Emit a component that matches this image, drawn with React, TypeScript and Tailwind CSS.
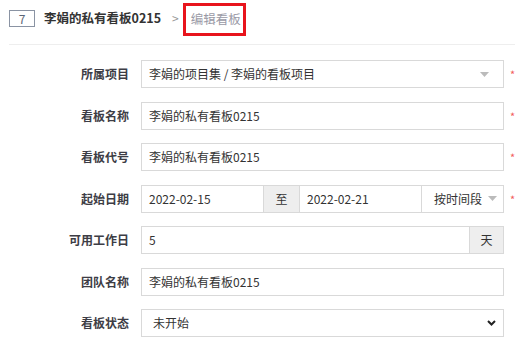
import React from "react";

const font = { fontFamily: '"Noto Sans CJK SC", "Noto Sans", sans-serif' };

function Caret() {
  return (
    <svg width="9" height="5" viewBox="0 0 9 5" className="shrink-0">
      <path d="M0 0 L9 0 L4.5 5 Z" fill="#bbb" />
    </svg>
  );
}

function Star({ show = true }: { show?: boolean }) {
  return (
    <div className="w-[11px] shrink-0 self-start pt-[9px] pl-[6px] text-[11px] leading-none text-[#f25c5c]">
      {show ? "*" : ""}
    </div>
  );
}

function Row({ label, children, star = true }: { label: string; children: React.ReactNode; star?: boolean }) {
  return (
    <div className="flex h-[28px] items-stretch">
      <div className="w-[141px] shrink-0 pr-[12px] text-right text-[12px] font-bold leading-[28px] text-[#3d3d45]">
        {label}
      </div>
      <div className="flex w-[363px] shrink-0">{children}</div>
      <Star show={star} />
    </div>
  );
}

function Box({ children, className = "" }: { children: React.ReactNode; className?: string }) {
  return (
    <div className={"flex items-center border border-[#d9d9d9] bg-white pl-[7px] text-[12px] text-[#333] " + className}>
      {children}
    </div>
  );
}

export default function App() {
  return (
    <div className="h-[349px] w-[515px] overflow-hidden bg-white" style={font}>
      <div className="ml-[9px] flex h-[45px] items-start border-b border-[#eeeeee]">
        <div className="mt-[10px] flex h-[17px] w-[26px] items-center justify-center border border-[#8a93a3] text-[12px] leading-none text-[#5b6575]">
          7
        </div>
        <div className="ml-[9px] mt-[8px] text-[12.5px] font-bold leading-[20px] text-[#333]">李娟的私有看板0215</div>
        <div className="ml-[11px] mt-[9px] text-[12px] leading-[18px] text-[#999]">&gt;</div>
        <div className="ml-[4px] mt-[3px] flex h-[33px] w-[63px] items-center border-[3px] border-[#e8141c] pl-[5px] text-[12.5px] text-[#9a9aa6]">
          编辑看板
        </div>
      </div>

      <div className="mt-[15px] flex flex-col gap-[13.5px]">
        <Row label="所属项目">
          <Box className="w-full justify-between pr-[14px]">
            <span>李娟的项目集 / 李娟的看板项目</span>
            <Caret />
          </Box>
        </Row>
        <Row label="看板名称">
          <Box className="w-full">李娟的私有看板0215</Box>
        </Row>
        <Row label="看板代号">
          <Box className="w-full">李娟的私有看板0215</Box>
        </Row>
        <Row label="起始日期">
          <Box className="w-[123px] shrink-0">2022-02-15</Box>
          <div className="flex w-[35px] shrink-0 items-center justify-center border-y border-[#d9d9d9] bg-[#eeeeee] text-[12px] text-[#333]">
            至
          </div>
          <Box className="w-[123px] shrink-0">2022-02-21</Box>
          <div className="flex w-[82px] shrink-0 items-center border border-l-0 border-[#d9d9d9] bg-white pl-[12px] text-[12px] text-[#333]">
            <span>按时间段</span>
            <span className="ml-[6px]">
              <Caret />
            </span>
          </div>
        </Row>
        <Row label="可用工作日" star={false}>
          <Box className="flex-1">5</Box>
          <div className="flex w-[34px] shrink-0 items-center justify-center border border-l-0 border-[#d9d9d9] bg-[#eeeeee] text-[12px] text-[#333]">
            天
          </div>
        </Row>
        <Row label="团队名称" star={false}>
          <Box className="w-full">李娟的私有看板0215</Box>
        </Row>
        <Row label="看板状态" star={false}>
          <Box className="w-full justify-between pl-[11px] pr-[7px]">
            <span>未开始</span>
            <svg width="9" height="6" viewBox="0 0 9 6">
              <path d="M1 1 L4.5 4.5 L8 1" fill="none" stroke="#222" strokeWidth="2" />
            </svg>
          </Box>
        </Row>
      </div>
    </div>
  );
}
